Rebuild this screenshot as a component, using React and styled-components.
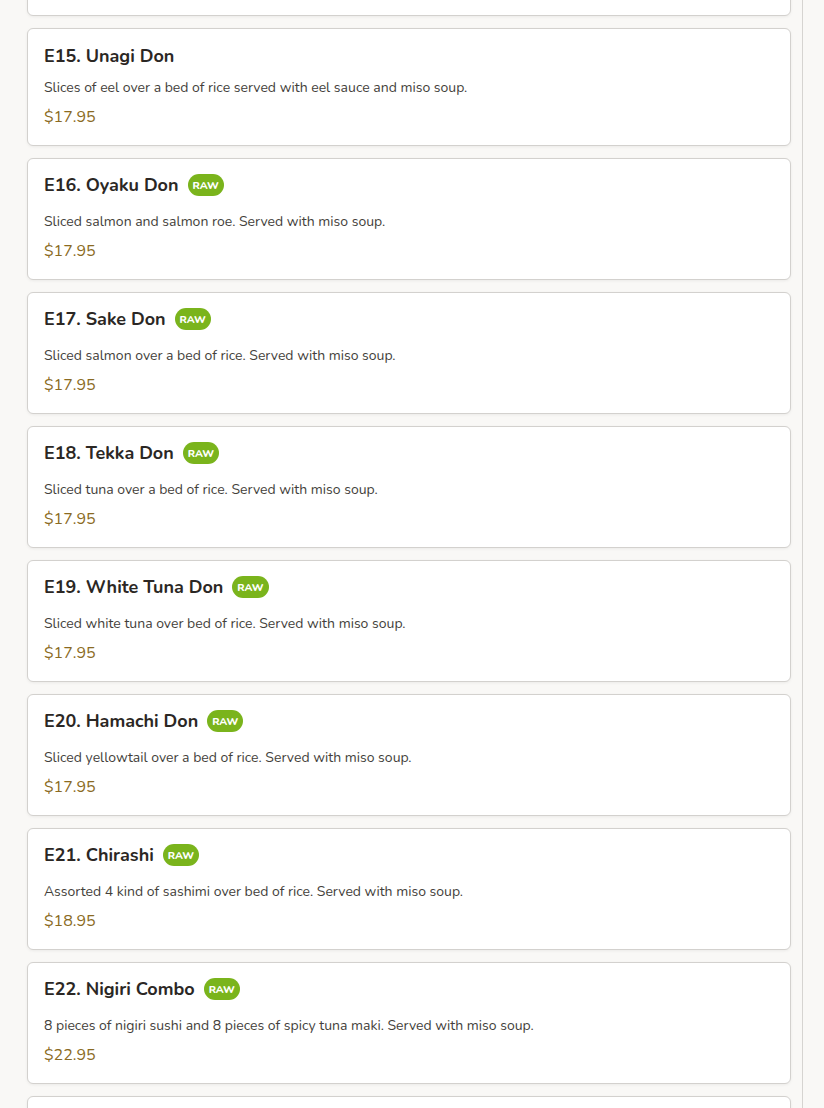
import React from 'react'
import styled, { createGlobalStyle } from 'styled-components'

const Global = createGlobalStyle`
  html, body {
    margin: 0;
    padding: 0;
    background: #f9f8f6;
    font-family: Nunito, Lato, "Noto Sans", sans-serif;
  }
`

const Page = styled.div`
  width: 803px;
  height: 1108px;
  overflow: hidden;
  border-right: 1px solid #d6d4d1;
  box-sizing: border-box;
`

const List = styled.div`
  display: flex;
  flex-direction: column;
  gap: 12px;
  padding: 0 11px 0 27px;
  margin-top: -104px;
`

const Card = styled.div`
  background: #fff;
  border: 1px solid #d3d1ce;
  border-radius: 6px;
  box-shadow: 0 1px 3px rgba(0, 0, 0, 0.06);
  padding: 15px 16px;
  min-height: ${(p) => (p.$empty ? '120px' : 'auto')};
  box-sizing: border-box;
`

const TitleRow = styled.div`
  display: flex;
  align-items: center;
  gap: 9px;
  height: ${(p) => (p.$raw ? '22px' : '24px')};
  margin-bottom: ${(p) => (p.$raw ? '16px' : '10px')};
`

const Title = styled.h3`
  margin: 0;
  font-size: 18px;
  font-weight: 700;
  color: #2b2724;
  line-height: 24px;
`

const Badge = styled.span`
  display: inline-flex;
  align-items: center;
  justify-content: center;
  height: 22px;
  padding: 0 5px;
  border-radius: 11px;
  background: #7ab41c;
  color: #fff;
  font-size: 10.5px;
  font-weight: 800;
`

const Desc = styled.p`
  margin: 0 0 8px;
  font-size: 14px;
  line-height: 20px;
  color: #443f3b;
`

const Price = styled.div`
  font-size: 16px;
  line-height: 23px;
  padding-bottom: 1px;
  color: #8a6a22;
`

const items = [
  { name: 'E15. Unagi Don', desc: 'Slices of eel over a bed of rice served with eel sauce and miso soup.', price: '$17.95' },
  { name: 'E16. Oyaku Don', raw: true, desc: 'Sliced salmon and salmon roe. Served with miso soup.', price: '$17.95' },
  { name: 'E17. Sake Don', raw: true, desc: 'Sliced salmon over a bed of rice. Served with miso soup.', price: '$17.95' },
  { name: 'E18. Tekka Don', raw: true, desc: 'Sliced tuna over a bed of rice. Served with miso soup.', price: '$17.95' },
  { name: 'E19. White Tuna Don', raw: true, desc: 'Sliced white tuna over bed of rice. Served with miso soup.', price: '$17.95' },
  { name: 'E20. Hamachi Don', raw: true, desc: 'Sliced yellowtail over a bed of rice. Served with miso soup.', price: '$17.95' },
  { name: 'E21. Chirashi', raw: true, desc: 'Assorted 4 kind of sashimi over bed of rice. Served with miso soup.', price: '$18.95' },
  { name: 'E22. Nigiri Combo', raw: true, desc: '8 pieces of nigiri sushi and 8 pieces of spicy tuna maki. Served with miso soup.', price: '$22.95' },
]

export default function App() {
  return (
    <Page>
      <Global />
      <List>
        <Card $empty />
        {items.map((it) => (
          <Card key={it.name}>
            <TitleRow $raw={it.raw}>
              <Title>{it.name}</Title>
              {it.raw && <Badge>RAW</Badge>}
            </TitleRow>
            <Desc>{it.desc}</Desc>
            <Price>{it.price}</Price>
          </Card>
        ))}
        <Card $empty />
      </List>
    </Page>
  )
}
